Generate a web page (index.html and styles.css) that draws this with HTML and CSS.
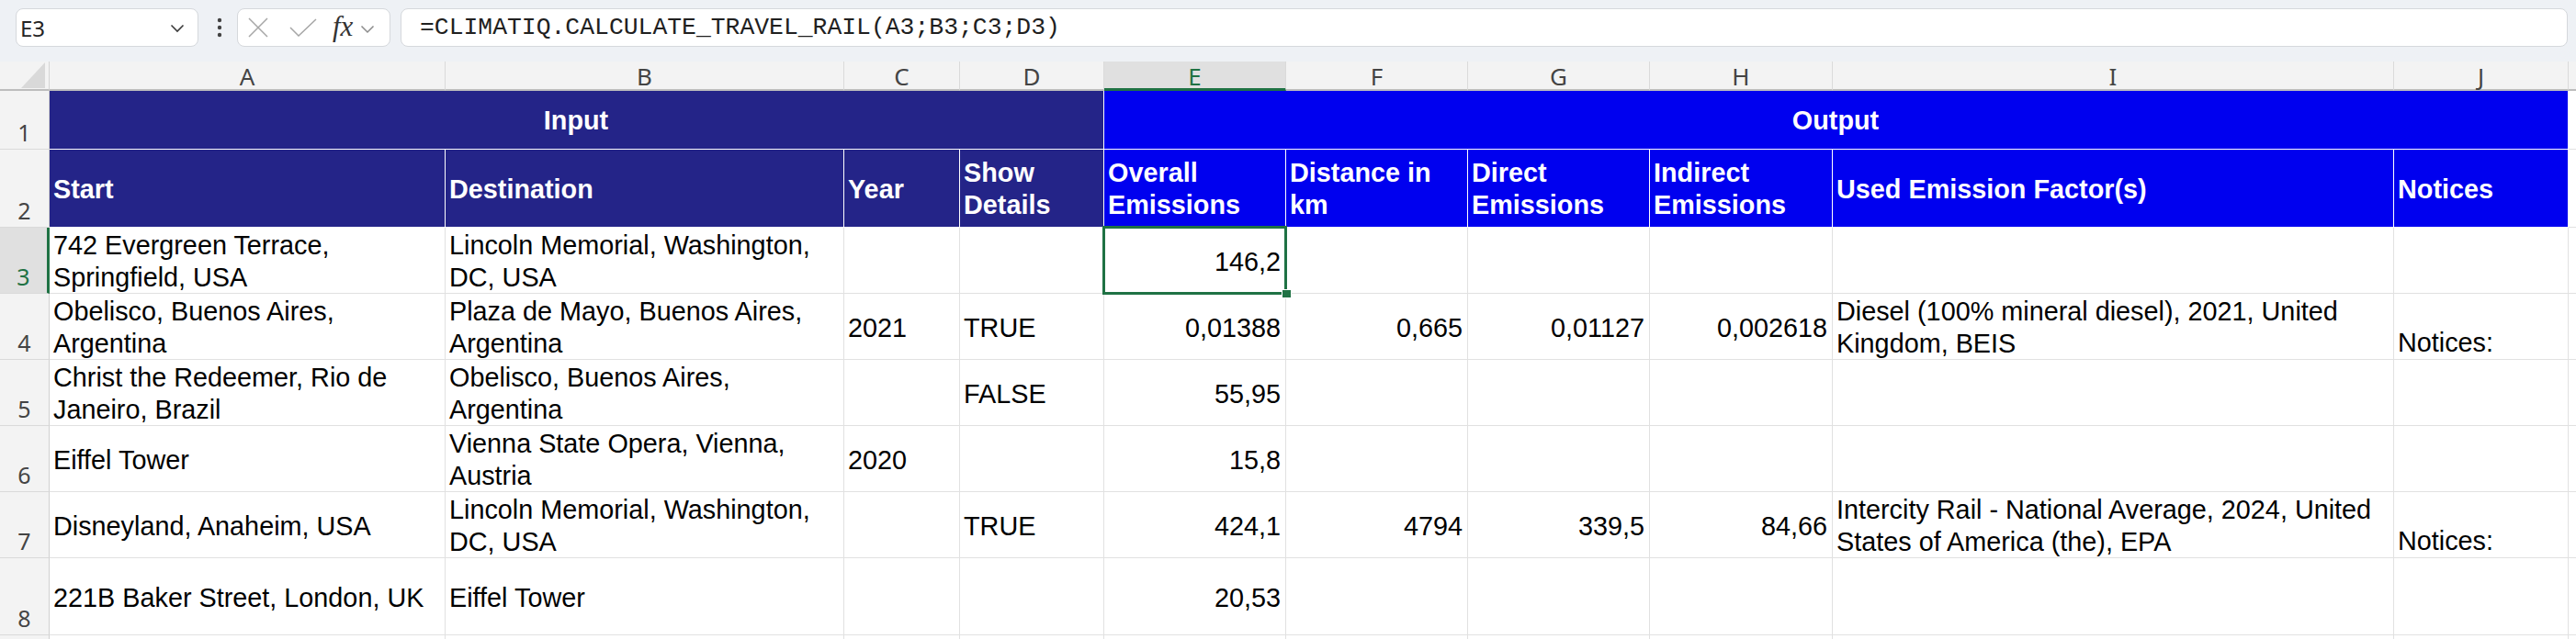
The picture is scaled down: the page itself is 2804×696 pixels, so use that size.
FILE: index.html
```html
<!DOCTYPE html>
<html lang="en">
<head>
<meta charset="utf-8">
<title>Sheet</title>
<link rel="stylesheet" href="styles.css">
</head>
<body>
<div class="app">
  <div class="toolbar">
    <div class="namebox">
      <span class="namebox-text">E3</span>
      <svg class="chev" width="16" height="10" viewBox="0 0 16 10"><path d="M1.5 1.5 L8 8 L14.5 1.5" fill="none" stroke="#3b3b3b" stroke-width="1.6"/></svg>
    </div>
    <div class="dots">
      <svg width="8" height="24" viewBox="0 0 8 24"><circle cx="4" cy="4" r="2.2" fill="#424242"/><circle cx="4" cy="12" r="2.2" fill="#424242"/><circle cx="4" cy="20" r="2.2" fill="#424242"/></svg>
    </div>
    <div class="iconbox">
      <svg class="ic-x" width="22" height="22" viewBox="0 0 22 22"><path d="M1 1 L21 21 M21 1 L1 21" stroke="#a6a6a6" stroke-width="1.5" fill="none"/></svg>
      <svg class="ic-check" width="30" height="20" viewBox="0 0 30 20"><path d="M1 10 L10 19 L29 1" stroke="#a6a6a6" stroke-width="1.5" fill="none"/></svg>
      <span class="fx">fx</span>
      <svg class="ic-chev" width="16" height="10" viewBox="0 0 16 10"><path d="M1.5 1.5 L8 8 L14.5 1.5" fill="none" stroke="#8a8a8a" stroke-width="1.5"/></svg>
    </div>
    <div class="formula">=CLIMATIQ.CALCULATE_TRAVEL_RAIL(A3;B3;C3;D3)</div>
  </div>

  <div class="sheet">
    <!-- column headers -->
    <div class="corner"><svg width="26" height="28" viewBox="0 0 26 28"><polygon points="26,0 26,28 0,28" fill="#d9d9d9"/></svg></div>
    <div class="colhead">A</div>
    <div class="colhead">B</div>
    <div class="colhead">C</div>
    <div class="colhead">D</div>
    <div class="colhead sel">E</div>
    <div class="colhead">F</div>
    <div class="colhead">G</div>
    <div class="colhead">H</div>
    <div class="colhead">I</div>
    <div class="colhead">J</div>
    <div class="colhead"></div>

    <!-- row 1 -->
    <div class="rowhead">1</div>
    <div class="hdr in span4 center">Input</div>
    <div class="hdr out span6 center">Output</div>
    <div class="cell"></div>

    <!-- row 2 -->
    <div class="rowhead">2</div>
    <div class="hdr in">Start</div>
    <div class="hdr in">Destination</div>
    <div class="hdr in">Year</div>
    <div class="hdr in">Show Details</div>
    <div class="hdr out">Overall Emissions</div>
    <div class="hdr out">Distance in km</div>
    <div class="hdr out">Direct Emissions</div>
    <div class="hdr out">Indirect Emissions</div>
    <div class="hdr out">Used Emission Factor(s)</div>
    <div class="hdr out">Notices</div>
    <div class="cell"></div>

    <!-- row 3 -->
    <div class="rowhead sel">3</div>
    <div class="cell">742 Evergreen Terrace, Springfield, USA</div>
    <div class="cell">Lincoln Memorial, Washington, DC, USA</div>
    <div class="cell"></div>
    <div class="cell"></div>
    <div class="cell num active">146,2</div>
    <div class="cell"></div>
    <div class="cell"></div>
    <div class="cell"></div>
    <div class="cell"></div>
    <div class="cell"></div>
    <div class="cell"></div>

    <!-- row 4 -->
    <div class="rowhead">4</div>
    <div class="cell">Obelisco, Buenos Aires, Argentina</div>
    <div class="cell">Plaza de Mayo, Buenos Aires, Argentina</div>
    <div class="cell">2021</div>
    <div class="cell">TRUE</div>
    <div class="cell num">0,01388</div>
    <div class="cell num">0,665</div>
    <div class="cell num">0,01127</div>
    <div class="cell num">0,002618</div>
    <div class="cell">Diesel (100% mineral diesel), 2021, United Kingdom, BEIS</div>
    <div class="cell bottom">Notices:</div>
    <div class="cell"></div>

    <!-- row 5 -->
    <div class="rowhead">5</div>
    <div class="cell">Christ the Redeemer, Rio de Janeiro, Brazil</div>
    <div class="cell">Obelisco, Buenos Aires, Argentina</div>
    <div class="cell"></div>
    <div class="cell">FALSE</div>
    <div class="cell num">55,95</div>
    <div class="cell"></div>
    <div class="cell"></div>
    <div class="cell"></div>
    <div class="cell"></div>
    <div class="cell"></div>
    <div class="cell"></div>

    <!-- row 6 -->
    <div class="rowhead">6</div>
    <div class="cell">Eiffel Tower</div>
    <div class="cell">Vienna State Opera, Vienna, Austria</div>
    <div class="cell">2020</div>
    <div class="cell"></div>
    <div class="cell num">15,8</div>
    <div class="cell"></div>
    <div class="cell"></div>
    <div class="cell"></div>
    <div class="cell"></div>
    <div class="cell"></div>
    <div class="cell"></div>

    <!-- row 7 -->
    <div class="rowhead">7</div>
    <div class="cell">Disneyland, Anaheim, USA</div>
    <div class="cell">Lincoln Memorial, Washington, DC, USA</div>
    <div class="cell"></div>
    <div class="cell">TRUE</div>
    <div class="cell num">424,1</div>
    <div class="cell num">4794</div>
    <div class="cell num">339,5</div>
    <div class="cell num">84,66</div>
    <div class="cell">Intercity Rail - National Average, 2024, United States of America (the), EPA</div>
    <div class="cell bottom">Notices:</div>
    <div class="cell"></div>

    <!-- row 8 -->
    <div class="rowhead">8</div>
    <div class="cell">221B Baker Street, London, UK</div>
    <div class="cell">Eiffel Tower</div>
    <div class="cell"></div>
    <div class="cell"></div>
    <div class="cell num">20,53</div>
    <div class="cell"></div>
    <div class="cell"></div>
    <div class="cell"></div>
    <div class="cell"></div>
    <div class="cell"></div>
    <div class="cell"></div>

    <!-- row 9 (only its top edge is in view) -->
    <div class="rowhead"></div>
    <div class="cell"></div>
    <div class="cell"></div>
    <div class="cell"></div>
    <div class="cell"></div>
    <div class="cell"></div>
    <div class="cell"></div>
    <div class="cell"></div>
    <div class="cell"></div>
    <div class="cell"></div>
    <div class="cell"></div>
    <div class="cell"></div>
  </div>
</div>
</body>
</html>
```

FILE: styles.css
```css
html, body {
  margin: 0;
  padding: 0;
}
body {
  width: 2804px;
  height: 696px;
  overflow: hidden;
  background: #ffffff;
  font-family: "Liberation Sans", Arial, sans-serif;
}
.app {
  width: 2804px;
  height: 696px;
  overflow: hidden;
  display: flex;
  flex-direction: column;
}

/* ---------- toolbar ---------- */
.toolbar {
  height: 67px;
  flex: 0 0 67px;
  box-sizing: border-box;
  display: flex;
  align-items: flex-start;
  padding: 9px 9px 0 17px;
  background: #eef1f5;
}
.namebox {
  width: 199px;
  height: 42px;
  box-sizing: border-box;
  background: #ffffff;
  border: 1px solid #d5d8dc;
  border-radius: 8px;
  display: flex;
  align-items: center;
  justify-content: space-between;
  padding: 0 14px 0 4px;
}
.namebox-text {
  font-family: "Noto Sans", "Open Sans", sans-serif;
  font-size: 24px;
  color: #242424;
}
.chev { display: block; margin-top: 2px; }
.dots {
  width: 12px;
  height: 42px;
  margin-left: 17px;
  display: flex;
  align-items: center;
  justify-content: center;
}
.dots svg { display: block; }
.iconbox {
  width: 167px;
  height: 42px;
  margin-left: 13px;
  box-sizing: border-box;
  background: #ffffff;
  border: 1px solid #d5d8dc;
  border-radius: 8px;
  display: flex;
  align-items: center;
  padding-left: 11px;
}
.ic-x { display: block; margin-right: 23px; }
.ic-check { display: block; margin-right: 17px; }
.fx {
  font-family: "Liberation Serif", "DejaVu Serif", serif;
  font-style: italic;
  font-size: 31px;
  color: #333333;
  line-height: 1;
  margin-top: -4px;
  margin-right: 8px;
}
.ic-chev { display: block; margin-top: 3px; }
.formula {
  flex: 1;
  height: 42px;
  margin-left: 11px;
  box-sizing: border-box;
  background: #ffffff;
  border: 1px solid #d5d8dc;
  border-radius: 8px;
  padding-left: 20px;
  font-family: "Liberation Mono", "DejaVu Sans Mono", monospace;
  font-size: 26.4px;
  line-height: 40px;
  color: #202020;
  white-space: nowrap;
}

/* ---------- sheet ---------- */
.sheet {
  display: grid;
  grid-template-columns: 54px 431px 434px 126px 157px 198px 198px 198px 199px 611px 190px 80px;
  grid-template-rows: 32px 64px 85px 72px 72px 72px 72px 72px 84px 40px;
  width: 2884px;
}
.corner {
  background: #f3f3f3;
  box-sizing: border-box;
  border-bottom: 2px solid #bdbdbd;
  border-right: 1px solid #d4d4d4;
  display: flex;
  align-items: flex-end;
  justify-content: flex-end;
  padding: 0 4px 1px 0;
}
.corner svg { display: block; }
.colhead {
  background: #f3f3f3;
  box-sizing: border-box;
  border-right: 1px solid #dadada;
  border-bottom: 2px solid #bdbdbd;
  display: flex;
  align-items: center;
  justify-content: center;
  font-family: "Noto Sans", "Open Sans", sans-serif;
  font-size: 26px;
  color: #444444;
  padding-top: 2px;
}
.colhead.sel {
  background: #e0e0e0;
  color: #1f7244;
  border-bottom: 3px solid #1f7244;
}
.rowhead {
  background: #f3f3f3;
  box-sizing: border-box;
  border-bottom: 1px solid #dadada;
  border-right: 1px solid #d0d0d0;
  display: flex;
  align-items: flex-end;
  justify-content: center;
  font-family: "Noto Sans", "Open Sans", sans-serif;
  font-size: 25px;
  line-height: 1;
  color: #444444;
  padding-bottom: 5px;
}
.rowhead.sel {
  background: #e0e0e0;
  color: #1f7244;
  border-right: 3px solid #1f7244;
}
.cell, .hdr {
  box-sizing: border-box;
  border-right: 1px solid #e1e1e1;
  border-bottom: 1px solid #e1e1e1;
  display: flex;
  flex-direction: column;
  justify-content: center;
  padding: 3px 5px 0 4px;
  font-size: 28.8px;
  line-height: 35px;
  color: #000000;
  overflow: hidden;
}
.hdr {
  color: #ffffff;
  font-weight: bold;
  border-right-color: #ffffff;
  border-bottom-color: #ffffff;
  padding-top: 2px;
}
.hdr.in { background: #242488; }
.hdr.out { background: #0000ef; }
.span4 { grid-column: span 4; }
.span6 { grid-column: span 6; }
.center { text-align: center; }
.num { text-align: right; }
.bottom {
  justify-content: flex-end;
  padding-bottom: 0px;
}
.active {
  position: relative;
  overflow: visible;
}
.active::after {
  content: "";
  position: absolute;
  left: -2px;
  top: -2px;
  right: -2px;
  bottom: -2px;
  border: 3px solid #1f7244;
  pointer-events: none;
}
.active::before {
  content: "";
  position: absolute;
  right: -7px;
  bottom: -6px;
  width: 9px;
  height: 8px;
  background: #1f7244;
  border: 1px solid #ffffff;
  z-index: 2;
}
```
